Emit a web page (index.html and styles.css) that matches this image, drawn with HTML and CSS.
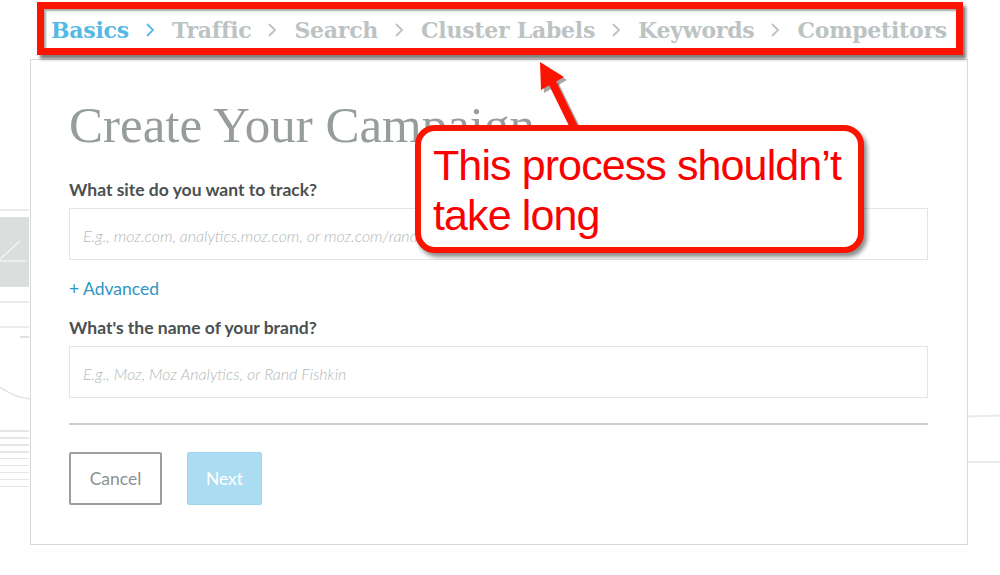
FILE: index.html
```html
<!DOCTYPE html>
<html>
<head>
<meta charset="utf-8">
<link rel="stylesheet" href="styles.css">
</head>
<body>
<div class="stage">
  <div class="bg-left">
    <div class="bg-rule r1"></div>
    <div class="bg-chart">
      <svg width="30" height="70" viewBox="0 0 30 70"><path d="M0 42 L20 24" stroke="#f4f4f4" stroke-width="1.5" fill="none"/><path d="M0 44 H26" stroke="#f0f0f0" stroke-width="1.5"/></svg>
    </div>
    <div class="bg-rule r2"></div>
    <div class="bg-rule r3"></div>
    <div class="bg-rule r4"></div>
    <svg class="bg-curve" width="30" height="30" viewBox="0 0 30 30"><path d="M0 4 Q14 14 30 16" stroke="#dfe2e2" stroke-width="1.5" fill="none"/></svg>
    <div class="bg-lines"></div>
  </div>
  <div class="bg-right">
    <div class="bg-rule rr1"></div>
    <div class="bg-rule rr2"></div>
  </div>

  <nav class="crumbs">
    <span class="crumb active">Basics</span>
    <svg class="chev active" width="10" height="16" viewBox="0 0 10 16"><path d="M2 2 L8 8 L2 14" fill="none" stroke-width="1.8"/></svg>
    <span class="crumb">Traffic</span>
    <svg class="chev" width="10" height="16" viewBox="0 0 10 16"><path d="M2 2 L8 8 L2 14" fill="none" stroke-width="1.8"/></svg>
    <span class="crumb">Search</span>
    <svg class="chev" width="10" height="16" viewBox="0 0 10 16"><path d="M2 2 L8 8 L2 14" fill="none" stroke-width="1.8"/></svg>
    <span class="crumb">Cluster Labels</span>
    <svg class="chev" width="10" height="16" viewBox="0 0 10 16"><path d="M2 2 L8 8 L2 14" fill="none" stroke-width="1.8"/></svg>
    <span class="crumb">Keywords</span>
    <svg class="chev" width="10" height="16" viewBox="0 0 10 16"><path d="M2 2 L8 8 L2 14" fill="none" stroke-width="1.8"/></svg>
    <span class="crumb">Competitors</span>
  </nav>

  <main class="card">
    <h1 class="title">Create Your Campaign</h1>
    <label class="label">What site do you want to track?</label>
    <div class="input"><span class="ph">E.g., moz.com, analytics.moz.com, or moz.com/rand</span></div>
    <a class="advanced">+ Advanced</a>
    <label class="label label2">What's the name of your brand?</label>
    <div class="input"><span class="ph">E.g., Moz, Moz Analytics, or Rand Fishkin</span></div>
    <hr class="divider">
    <div class="actions">
      <button class="btn cancel">Cancel</button>
      <button class="btn next">Next</button>
    </div>
  </main>

  <svg class="arrow" width="1000" height="140" viewBox="0 0 1000 140">
    <g class="arrow-shadow" transform="translate(3,3)">
      <path d="M552 82 L574 127" stroke="rgba(0,0,0,0.35)" stroke-width="8" fill="none"/>
      <path d="M540 62 L564 77 L541 90 Z" fill="rgba(0,0,0,0.35)"/>
    </g>
    <path d="M552 82 L574 127" stroke="#fb1400" stroke-width="8" fill="none"/>
    <path d="M540 62 L564 77 L541 90 Z" fill="#fb1400"/>
  </svg>

  <div class="callout">This process shouldn’t<br>take long</div>
</div>
</body>
</html>
```

FILE: styles.css
```css
* { box-sizing: border-box; }
html, body { margin: 0; padding: 0; background: #fff; }
.stage {
  position: relative;
  width: 1000px;
  height: 575px;
  overflow: hidden;
  padding-top: 2px;
}

/* background decoration */
.bg-left { position: absolute; left: 0; top: 0; width: 29px; height: 575px; }
.bg-rule { position: absolute; height: 2px; background: #e9ecec; }
.r1 { top: 209px; left: 0; width: 29px; }
.bg-chart { position: absolute; top: 217px; left: 0; width: 29px; height: 70px; background: #dcdddd; }
.bg-chart svg { display: block; }
.r2 { top: 301px; left: 0; width: 29px; }
.r3 { top: 326px; left: 0; width: 29px; }
.r4 { top: 336px; left: 20px; width: 9px; background: #dde0e0; }
.bg-curve { position: absolute; top: 383px; left: 0; }
.bg-lines {
  position: absolute; top: 430px; left: 0; width: 29px; height: 58px;
  background: repeating-linear-gradient(to bottom, #e3e6e6 0 1.5px, transparent 1.5px 7px);
}
.bg-right { position: absolute; left: 968px; top: 0; width: 32px; height: 575px; }
.rr1 { top: 415px; left: 0; width: 32px; transform: rotate(-2deg); }
.rr2 { top: 461px; left: 0; width: 32px; }

/* breadcrumb box */
.crumbs {
  position: relative;
  z-index: 2;
  margin-left: 37px;
  width: 926px;
  height: 53px;
  border: 7px solid #fb1400;
  background: #fff;
  box-shadow: 3px 4px 3px rgba(0,0,0,0.5), inset 2px 2px 2px rgba(0,0,0,0.35);
  display: flex;
  align-items: center;
  gap: 14px;
  padding-left: 7px;
  padding-top: 3px;
}
.crumb {
  font-family: "DejaVu Serif", serif;
  font-weight: bold;
  font-size: 22px;
  letter-spacing: -0.25px;
  color: #bcc3c3;
  white-space: nowrap;
}
.crumb.active { color: #55b9e6; }
.chev { stroke: #bcc3c3; margin: 0 3px 0 2px; }
.chev.active { stroke: #55b9e6; }

/* card */
.card {
  margin: 4px 0 0 30px;
  width: 938px;
  height: 486px;
  border: 1.5px solid #d5dada;
  background: #fff;
  padding: 35px 39px 0 38px;
  display: flex;
  flex-direction: column;
  align-items: flex-start;
}
.title {
  margin: 0;
  font-family: "Liberation Serif", serif;
  font-weight: normal;
  font-size: 51px;
  line-height: 60px;
  color: #979d9d;
  white-space: nowrap;
}
.label {
  margin-top: 24px;
  font-family: Lato, "Open Sans", sans-serif;
  font-weight: bold;
  font-size: 17.5px;
  line-height: 21px;
  color: #4b5050;
}
.label2 { margin-top: 17px; }
.input {
  margin-top: 8px;
  width: 100%;
  height: 52px;
  border: 1.5px solid #e2e6e6;
  display: flex;
  align-items: center;
  padding-left: 13px;
  padding-top: 2px;
}
.ph {
  font-family: Lato, "Open Sans", sans-serif;
  font-style: italic;
  font-weight: 300;
  font-size: 16px;
  color: #b3b8b8;
  white-space: nowrap;
}
.advanced {
  margin-top: 18px;
  font-family: Lato, "Open Sans", sans-serif;
  font-size: 17.5px;
  line-height: 22px;
  color: #2e96c4;
}
.divider {
  margin: 25px 0 0 0;
  width: 100%;
  height: 2px;
  border: 0;
  background: #c9cdcd;
}
.actions {
  margin-top: 27px;
  display: flex;
  gap: 25px;
}
.btn {
  height: 53px;
  font-family: Lato, "Open Sans", sans-serif;
  font-size: 17.5px;
  border-radius: 2px;
  padding: 0;
  cursor: pointer;
}
.cancel {
  width: 93px;
  background: #fff;
  border: 2px solid #999e9e;
  color: #8b9191;
}
.next {
  width: 75px;
  background: #abdcf1;
  border: 1px solid #a2d5ec;
  color: #fff;
}

/* annotation overlays */
.arrow { position: absolute; left: 0; top: 0; z-index: 3; }
.callout {
  position: absolute;
  z-index: 4;
  left: 415px;
  top: 125px;
  width: 449px;
  height: 128px;
  border: 6px solid #fb1400;
  border-radius: 20px;
  background: #fff;
  box-shadow: 3px 4px 4px rgba(0,0,0,0.45);
  padding: 9px 0 0 12px;
  font-family: "Liberation Sans", Arial, sans-serif;
  font-size: 43px;
  letter-spacing: -0.9px;
  line-height: 50px;
  color: #fb0000;
  white-space: nowrap;
}
```
